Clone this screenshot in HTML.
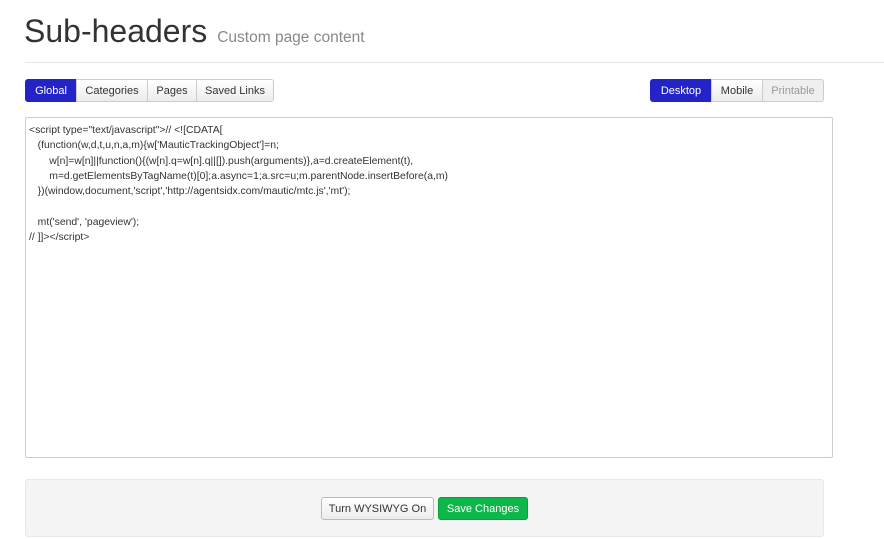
<!DOCTYPE html>
<html><head><style>
*{box-sizing:border-box;margin:0;padding:0}
body{width:884px;height:539px;background:#fff;font-family:"Liberation Sans",Arial,sans-serif;position:relative;overflow:hidden;color:#333}
.t{position:absolute;left:24px;top:13px;font-size:32px;color:#333;white-space:nowrap}
.t small{font-size:15.5px;color:#888;margin-left:10px}
.hr{position:absolute;left:25px;right:0;top:62px;border-top:1px solid #e6e6e6}
.bg{position:absolute;top:79px;height:23px;display:flex;border-radius:3px}
.bg div{height:23px;font-size:11px;line-height:22px;text-align:center;border:1px solid #ccc;margin-left:-1px;background:linear-gradient(#fff,#ececec);color:#333}
.bg div:first-child{border-radius:3px 0 0 3px;margin-left:0}
.bg div:last-child{border-radius:0 3px 3px 0}
.bg .a{background:#2323c8;border-color:#2323c8;color:#fff}
.bg .d{background:#efefef;color:#999}
.ta{position:absolute;left:25px;top:117px;width:808px;height:341px;border:1px solid #ccc;border-radius:2px;padding:5px 3px;font-size:10.4px;line-height:15.3px;white-space:pre;color:#333}
.ft{position:absolute;left:25px;top:479px;width:799px;height:58px;background:#f4f4f4;border:1px solid #e8e8e8;border-radius:3px}
.b{position:absolute;top:497px;height:23px;font-size:11px;line-height:22px;text-align:center;border-radius:3px}
</style></head><body>
<div class="t">Sub-headers<small>Custom page content</small></div>
<div class="hr"></div>
<div class="bg" style="left:25px">
<div class="a" style="width:52px">Global</div><div style="width:72px">Categories</div><div style="width:50px">Pages</div><div style="width:78px">Saved Links</div></div>
<div class="bg" style="left:650px">
<div class="a" style="width:62px">Desktop</div><div style="width:52px">Mobile</div><div class="d" style="width:62px">Printable</div></div>
<div class="ta">&lt;script type="text/javascript"&gt;// &lt;![CDATA[
   (function(w,d,t,u,n,a,m){w['MauticTrackingObject']=n;
       w[n]=w[n]||function(){(w[n].q=w[n].q||[]).push(arguments)},a=d.createElement(t),
       m=d.getElementsByTagName(t)[0];a.async=1;a.src=u;m.parentNode.insertBefore(a,m)
   })(window,document,'script','http://agentsidx.com/mautic/mtc.js','mt');

   mt('send', 'pageview');
// ]]&gt;&lt;/script&gt;</div>
<div class="ft"></div>
<div class="b" style="left:321px;width:113px;border:1px solid #bbb;background:linear-gradient(#fff,#ececec);color:#333">Turn WYSIWYG On</div>
<div class="b" style="left:438px;width:90px;border:1px solid #0a9f3e;background:#0cb84a;color:#fff">Save Changes</div>
</body></html>
